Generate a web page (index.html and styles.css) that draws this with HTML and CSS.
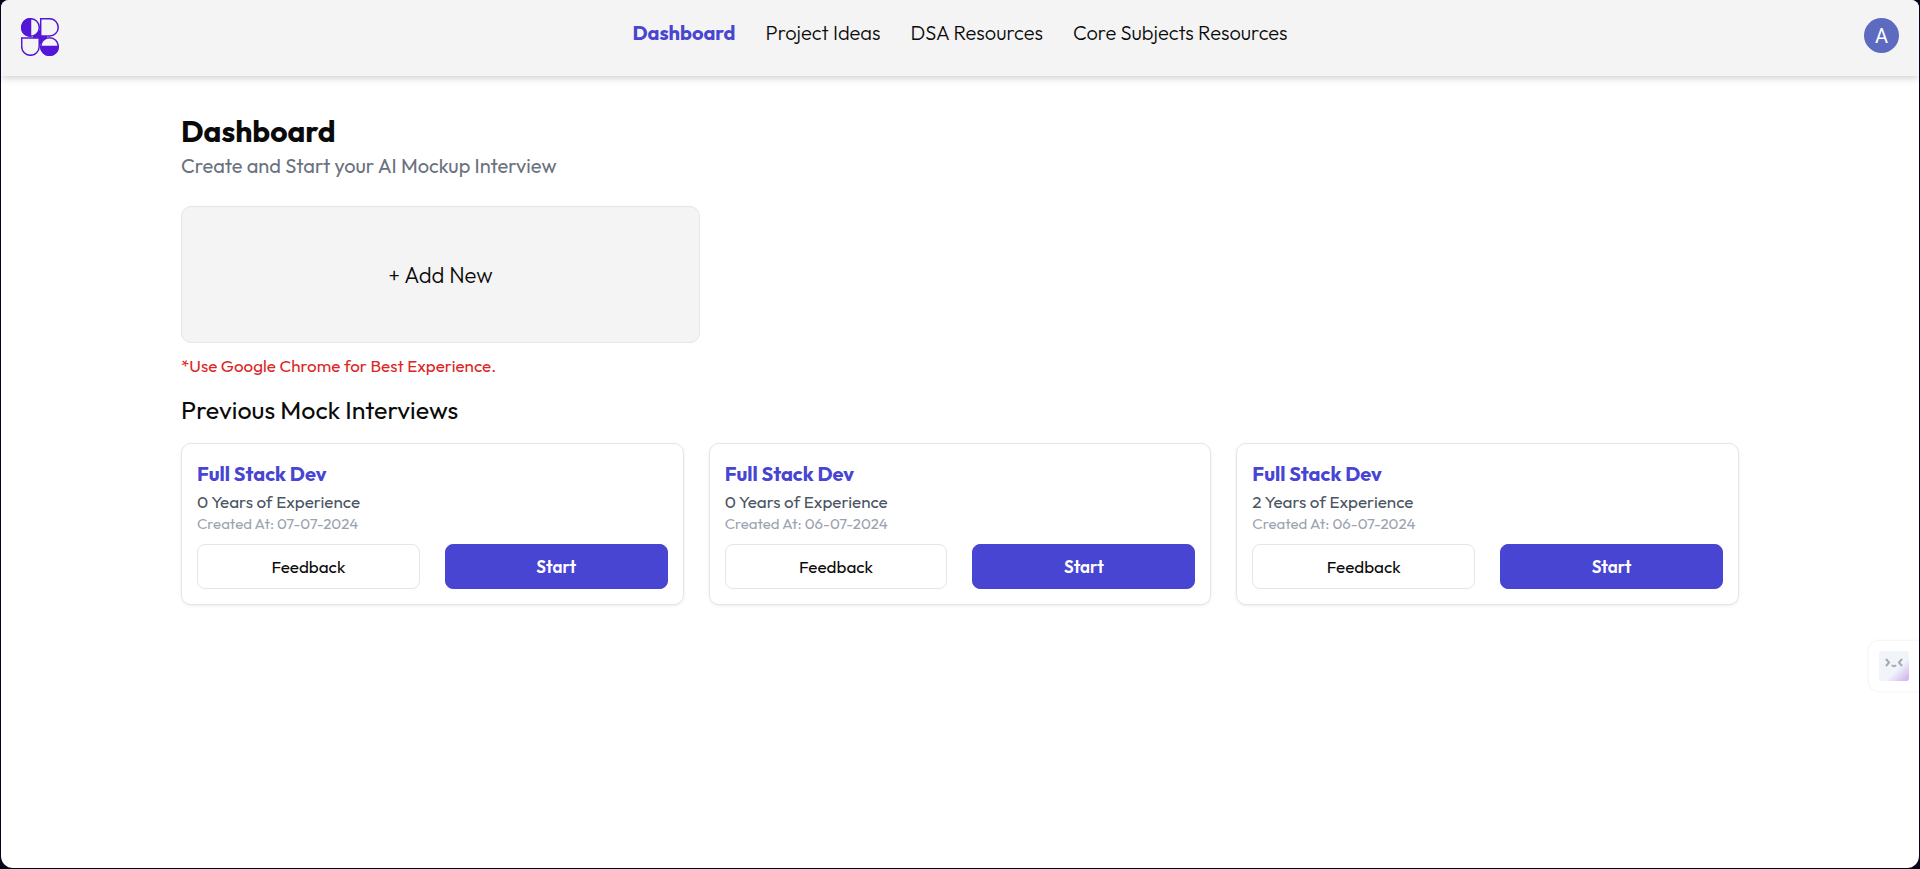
FILE: index.html
```html
<!DOCTYPE html>
<html lang="en">
<head>
<meta charset="utf-8">
<meta name="viewport" content="width=device-width, initial-scale=1">
<title>Dashboard</title>
<link rel="stylesheet" href="styles.css">
</head>
<body>
<div class="window">
  <header class="topbar">
    <a class="logo" href="#" aria-label="Home">
      <svg viewBox="0 0 38 38" width="38" height="38" fill="none" stroke="#5417d7" stroke-width="1.5">
        <path d="M12 12H26V26H12Z" fill="#5417d7" stroke="none"/>
        <circle cx="9.500" cy="9.500" r="8.800" fill="#f4f4f4"/>
        <path d="M9.500 .7a8.800 8.800 0 0 0 0 17.600Z" fill="#5417d7"/>
        <path d="M19.700 .7H28.500a8.700 8.700 0 0 1 0 17.400H19.700Z" fill="#f4f4f4"/>
        <path d="M.7 19.900H18.200V28.500a8.750 8.800 0 0 1-17.500 0Z" fill="#f4f4f4"/>
        <circle cx="28.500" cy="28.500" r="8.800" fill="#f4f4f4"/>
        <path d="M19.700 28.500h17.600a8.800 8.800 0 0 1-17.600 0Z" fill="#5417d7"/>
      </svg>
    </a>
    <nav class="nav">
      <a class="nav-link active" href="#">Dashboard</a>
      <a class="nav-link" href="#">Project Ideas</a>
      <a class="nav-link" href="#">DSA Resources</a>
      <a class="nav-link" href="#">Core Subjects Resources</a>
    </nav>
    <button class="avatar" type="button">A</button>
  </header>
  <main class="content">
    <h1 class="title">Dashboard</h1>
    <p class="subtitle">Create and Start your AI Mockup Interview</p>
    <button class="add-new" type="button">+ Add New</button>
    <p class="notice">*Use Google Chrome for Best Experience.</p>
    <h2 class="section-title">Previous Mock Interviews</h2>
    <div class="cards">
      <article class="card">
        <h3 class="role">Full Stack Dev</h3>
        <p class="experience">0 Years of Experience</p>
        <p class="created">Created At: 07-07-2024</p>
        <div class="actions">
          <button class="btn outline" type="button">Feedback</button>
          <button class="btn primary" type="button">Start</button>
        </div>
      </article>
      <article class="card">
        <h3 class="role">Full Stack Dev</h3>
        <p class="experience">0 Years of Experience</p>
        <p class="created">Created At: 06-07-2024</p>
        <div class="actions">
          <button class="btn outline" type="button">Feedback</button>
          <button class="btn primary" type="button">Start</button>
        </div>
      </article>
      <article class="card">
        <h3 class="role">Full Stack Dev</h3>
        <p class="experience">2 Years of Experience</p>
        <p class="created">Created At: 06-07-2024</p>
        <div class="actions">
          <button class="btn outline" type="button">Feedback</button>
          <button class="btn primary" type="button">Start</button>
        </div>
      </article>
    </div>
  </main>
  <button class="assistant" type="button" aria-label="Open assistant">
    <span class="face">
      <svg viewBox="0 0 30 30" width="30" height="30" fill="none" stroke="#a3a9b1" stroke-width="2">
        <path d="M7 8l3 3.500L7 15M23 8l-3 3.500 3 3.500M13 14q2 2.500 4 0"/>
      </svg>
    </span>
  </button>
</div>
</body>
</html>
```
FILE: styles.css
```css
* {
  box-sizing: border-box;
}

body {
  margin: 0;
  background: #06061a;
  color: #0a0a0a;
  font-family: Outfit, Lato, sans-serif;
  font-size: 20px;
  line-height: 30px;
}

h1, h2, h3, p {
  margin: 0;
}

button {
  font: inherit;
  color: inherit;
  cursor: pointer;
}

a {
  color: inherit;
  text-decoration: none;
}

.window {
  min-height: calc(100vh - 1px);
  margin: 0 1px 1px;
  background: #fff;
  border-radius: 8px 8px 12px 12px;
  overflow: hidden;
}

.topbar {
  display: grid;
  grid-template-columns: 1fr auto 1fr;
  align-items: start;
  padding: 18px 20px 20px;
  background: #f4f4f4;
  box-shadow: 0 1px 8px rgba(0, 0, 0, 0.24);
}

.logo {
  justify-self: start;
  height: 38px;
}

.logo svg,
.face svg {
  display: block;
}

.nav {
  display: flex;
  gap: 30px;
}

.nav-link {
  font-weight: 300;
}

.nav-link.active {
  color: #4845d2;
  font-weight: 700;
}

.avatar {
  justify-self: end;
  width: 35px;
  height: 35px;
  padding: 0;
  border: 0;
  border-radius: 50%;
  background: #5c6bc0;
  color: #fff;
  font-family: Roboto, sans-serif;
}

.content {
  padding: 35px 180px;
}

.title {
  font-size: 30px;
  line-height: 40px;
}

.subtitle {
  margin-bottom: 25px;
  color: #6b7280;
}

.add-new {
  display: block;
  width: calc((100% - 1px) / 3);
  height: 137px;
  border: 1px solid #e5e5e5;
  border-radius: 10px;
  background: #f4f4f4;
  font-size: 22px;
  font-weight: 300;
}

.notice {
  margin: 8px 0 14px;
  color: #dc2626;
  font-size: 17px;
}

.section-title {
  font-size: 25px;
  font-weight: 400;
}

.cards {
  display: grid;
  grid-template-columns: repeat(3, 1fr);
  gap: 25px;
  margin-top: 18px;
}

.card {
  padding: 15px;
  border: 1px solid #e5e5e5;
  border-radius: 10px;
  box-shadow: 0 1px 3px rgba(0, 0, 0, 0.08);
}

.role {
  color: #4845d2;
  font-size: 20px;
}

.experience {
  color: #4b5563;
  font-size: 17px;
  line-height: 26px;
}

.created {
  color: #9ca3af;
  font-size: 15px;
  line-height: 18px;
}

.actions {
  display: grid;
  grid-template-columns: 1fr 1fr;
  gap: 25px;
  margin-top: 11px;
}

.btn {
  height: 45px;
  border: 1px solid #e5e5e5;
  border-radius: 8px;
  background: #fff;
  font-size: 17px;
}

.btn.primary {
  border-color: #4845d2;
  background: #4845d2;
  color: #fff;
  font-weight: 600;
}

.assistant {
  position: fixed;
  top: 640px;
  right: 1px;
  padding: 10px;
  border: 1px solid #f7f7f7;
  border-right: 0;
  border-radius: 10px 0 0 10px;
  background: #fff;
  box-shadow: 0 0 3px rgba(0, 0, 0, 0.04);
}

.face {
  display: block;
  border-radius: 3px;
  background: linear-gradient(135deg, #f1f5f9 60%, #cfa9ee);
}
```
